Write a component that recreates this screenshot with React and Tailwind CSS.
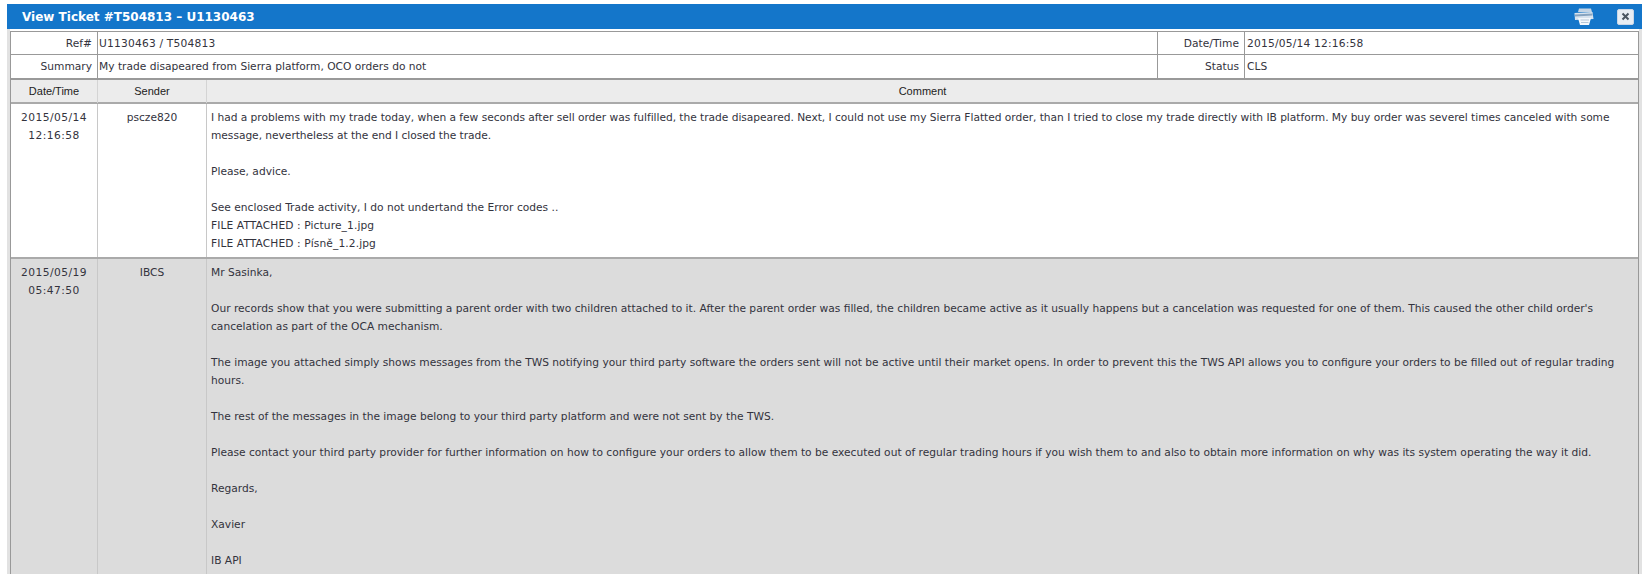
const font = { fontFamily: '"DejaVu Sans", Verdana, sans-serif' };

function Printer() {
  return (
    <svg width="20" height="18" viewBox="0 0 20 18">
      <path d="M5 0.5 L17 0.5 L18 4 L4 4 Z" fill="#c4d4e4" />
      <path d="M0.5 5 L18.5 4 L19.5 11 L1 12 Z" fill="#d8e3ee" />
      <path d="M1 6.5 L18.5 5.5 L18.5 7.5 L1 8.5 Z" fill="#86a3bf" />
      <path d="M4 10 L17 10 L15 17 L6 17 Z" fill="#f4f8fc" />
      <path d="M6.5 12 L15 12 M7 14.5 L14.5 14.5" stroke="#b4c6d8" strokeWidth="1" />
    </svg>
  );
}

function CloseBtn() {
  return (
    <div className="w-[17px] h-[16px] bg-[#e8edf3] rounded-[2px] border border-[#c9d6e6] flex items-center justify-center">
      <svg width="9" height="9" viewBox="0 0 9 9">
        <path d="M1.5 1.5 L7.5 7.5 M7.5 1.5 L1.5 7.5" stroke="#4a5560" strokeWidth="2" />
      </svg>
    </div>
  );
}

function InfoRow({ l1, v1, l2, v2, last, digits }) {
  return (
    <div className={`grid grid-cols-[87px_1060px_87px_1fr] h-[23px] text-[10.67px] leading-[23px] text-[#33333d] ${last ? "" : "border-b border-[#999999]"}`}>
      <div className="text-right pr-[5px] border-r border-[#999999]">{l1}</div>
      <div className={`pl-[1px] border-r border-[#999999] ${digits ? "tracking-[0.2px]" : ""}`}>{v1}</div>
      <div className="text-right pr-[5px] border-r border-[#999999]">{l2}</div>
      <div className={`pl-[2px] ${digits ? "tracking-[0.2px]" : ""}`}>{v2}</div>
    </div>
  );
}

function MsgRow({ date, time, sender, gray, children }) {
  return (
    <div className={`grid grid-cols-[87px_109px_1fr] text-[10.67px] leading-[18px] text-[#33333d] ${gray ? "bg-[#dcdcdc]" : "bg-white border-b-2 border-[#aaaaaa]"}`}>
      <div className="text-center border-r border-[#c8c8c8] pt-[5px] tracking-[0.45px]">
        <div>{date}</div>
        <div>{time}</div>
      </div>
      <div className="text-center border-r border-[#c8c8c8] pt-[5px]">{sender}</div>
      <div className="pl-[4px] pr-[19px] pt-[5px] pb-[4px]">{children}</div>
    </div>
  );
}

const Gap = () => <div className="h-[18px]" />;

export default function App() {
  return (
    <div style={font} className="w-[1646px] h-[574px] overflow-hidden bg-white pt-[4px] pl-[7px]">
      <div className="w-[1635px]">
        <div className="h-[25px] bg-[#1476ca] flex items-center pl-[15px] pr-[8px]">
          <div className="text-white font-bold text-[12px] flex-1">View Ticket #T504813 – U1130463</div>
          <div className="mr-[23px] mt-[1px]"><Printer /></div>
          <CloseBtn />
        </div>
        <div className="w-[1635px] border-l-[3px] border-r-[3px] border-[#e2e2e2] pt-[2px] h-[545px]">
          <div className="border border-[#999999] border-b-2 bg-white">
            <InfoRow digits l1="Ref#" v1="U1130463 / T504813" l2="Date/Time" v2="2015/05/14 12:16:58" />
            <InfoRow last l1="Summary" v1="My trade disapeared from Sierra platform, OCO orders do not" l2="Status" v2="CLS" />
          </div>
          <div className="border-l border-r border-[#999999]">
            <div className="grid grid-cols-[87px_109px_1fr] h-[24px] bg-[#ececec] text-center text-[11px] leading-[23px] text-[#222222] border-b-2 border-[#aaaaaa] [font-family:'Liberation_Sans',Arial,sans-serif]">
              <div className="border-r border-[#d4d4d4]">Date/Time</div>
              <div className="border-r border-[#d4d4d4]">Sender</div>
              <div>Comment</div>
            </div>
            <MsgRow date="2015/05/14" time="12:16:58" sender="pscze820">
              <div className="tracking-[-0.035px]">I had a problems with my trade today, when a few seconds after sell order was fulfilled, the trade disapeared. Next, I could not use my Sierra Flatted order, than I tried to close my trade directly with IB platform. My buy order was severel times canceled with some message, nevertheless at the end I closed the trade.</div>
              <Gap />
              <div>Please, advice.</div>
              <Gap />
              <div>See enclosed Trade activity, I do not undertand the Error codes ..</div>
              <div className="tracking-[0.1px]">FILE ATTACHED : Picture_1.jpg</div>
              <div className="tracking-[0.1px]">FILE ATTACHED : Písně_1.2.jpg</div>
            </MsgRow>
            <MsgRow gray date="2015/05/19" time="05:47:50" sender="IBCS">
              <div>Mr Sasinka,</div>
              <Gap />
              <div>Our records show that you were submitting a parent order with two children attached to it. After the parent order was filled, the children became active as it usually happens but a cancelation was requested for one of them. This caused the other child order's cancelation as part of the OCA mechanism.</div>
              <Gap />
              <div>The image you attached simply shows messages from the TWS notifying your third party software the orders sent will not be active until their market opens. In order to prevent this the TWS API allows you to configure your orders to be filled out of regular trading hours.</div>
              <Gap />
              <div>The rest of the messages in the image belong to your third party platform and were not sent by the TWS.</div>
              <Gap />
              <div>Please contact your third party provider for further information on how to configure your orders to allow them to be executed out of regular trading hours if you wish them to and also to obtain more information on why was its system operating the way it did.</div>
              <Gap />
              <div>Regards,</div>
              <Gap />
              <div>Xavier</div>
              <Gap />
              <div>IB API</div>
              <Gap />
            </MsgRow>
          </div>
        </div>
      </div>
    </div>
  );
}
